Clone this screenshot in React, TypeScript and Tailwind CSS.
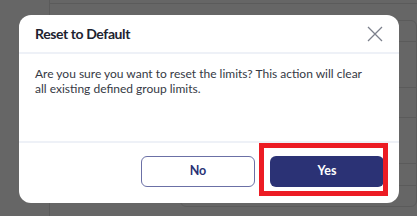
import React from "react";

export default function App() {
  return (
    <div className="relative w-[417px] h-[216px] overflow-hidden bg-[#666666]" style={{ fontFamily: "Lato, 'Noto Sans', sans-serif" }}>
      {/* dimmed background page */}
      <div className="flex h-full">
        <div className="w-[50px] shrink-0 border-r border-[#5b5b5b]" />
        <div className="flex-1 flex flex-col">
          <div className="h-[4px] border-b border-[#5b5b5b]" />
          <div className="flex-1 pl-[130px] pt-[16px]">
            <div className="h-[187px] rounded-[6px] border border-[#5b5b5b] flex flex-col">
              <div className="h-[21px] border-b border-[#5b5b5b]" />
              <div className="h-[46px] border-b border-[#5b5b5b]" />
              <div className="h-[30px] border-b border-[#5b5b5b]" />
              <div className="h-[46px] border-b border-[#5b5b5b]" />
              <div className="h-[22px] border-b border-[#5b5b5b]" />
            </div>
          </div>
        </div>
      </div>

      {/* modal */}
      <div className="absolute left-[19px] top-[15px] w-[380px] h-[188px] rounded-[12px] bg-white flex flex-col">
        <div className="h-[39px] px-[16px] flex items-center justify-between border-b-2 border-[#eef1f7]">
          <div className="text-[14px] font-bold text-[#1d2330] tracking-[-0.4px]">Reset to Default</div>
          <svg width="16" height="16" viewBox="0 0 16 16">
            <path d="M1 1 L15 15 M15 1 L1 15" stroke="#7c808c" strokeWidth="1.3" fill="none" />
          </svg>
        </div>
        <div className="flex-1 px-[16px] pt-[12px] text-[12px] leading-[15px] text-[#353944]">
          Are you sure you want to reset the limits? This action will clear
          <br />
          all existing defined group limits.
        </div>
        <div className="h-[62px] border-t-2 border-[#eef1f7] flex items-start justify-end gap-[15px] pt-[13px] pr-[15px]">
          <button className="w-[114px] h-[31px] rounded-[6px] border border-[#6b70a6] bg-white text-[#2b3275] text-[12.5px] font-bold">
            No
          </button>
          <div className="relative">
            <button className="w-[114px] h-[31px] rounded-[6px] bg-[#2b3275] text-white text-[12.5px] font-bold">
              Yes
            </button>
            <div className="absolute left-[-11px] right-[-4px] top-[-13px] bottom-[-9px] border-[5px] border-[#ec1c24]" />
          </div>
        </div>
      </div>
    </div>
  );
}
